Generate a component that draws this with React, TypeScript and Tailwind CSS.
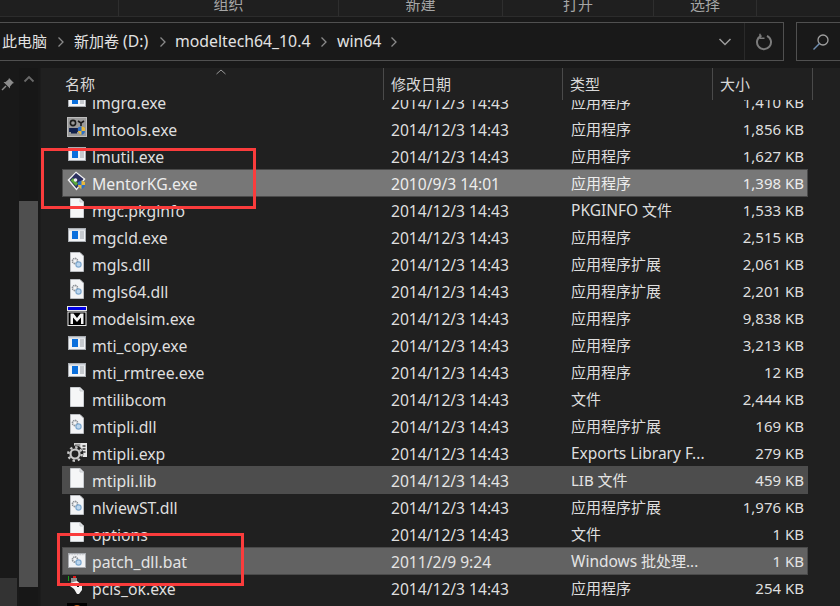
import React from "react";

const FONT = '"Noto Sans", "Noto Sans CJK SC", sans-serif';

function ExeIcon() {
  return (
    <svg width="20" height="20" viewBox="0 0 20 20">
      <rect x="1.500" y="3.500" width="17" height="13" fill="#f1f3f5" stroke="#a9adb2" />
      <rect x="2" y="4" width="16" height="1.500" fill="#cdd2d8" />
      <rect x="5" y="6" width="6" height="8" fill="#0a6fdc" />
      <path d="M13 7h4M13 9h4M13 11h4M13 13h4" stroke="#9aa0a8" strokeWidth="1" />
    </svg>
  );
}

function DocIcon() {
  return (
    <svg width="20" height="20" viewBox="0 0 20 20">
      <path d="M3.500 .5H13L16.500 4V19.500H3.500Z" fill="#f5f6f7" stroke="#c9ccd0" />
      <path d="M13 .5V4H16.500" fill="#e0e2e5" stroke="#c9ccd0" />
    </svg>
  );
}

function DllIcon() {
  return (
    <svg width="20" height="20" viewBox="0 0 20 20">
      <path d="M3.500 .5H13L16.500 4V19.500H3.500Z" fill="#f3f4f6" stroke="#b9bcc0" />
      <circle cx="8" cy="9" r="2.600" fill="none" stroke="#8b8f94" strokeWidth="1.600" strokeDasharray="1.400 .6" />
      <circle cx="11.500" cy="12.500" r="2.600" fill="#bcd6ee" stroke="#7fa9cf" strokeWidth="1.200" />
    </svg>
  );
}

function BatIcon() {
  return (
    <svg width="20" height="20" viewBox="0 0 20 20">
      <rect x="1.500" y="4.500" width="17" height="14" fill="#f1f2f4" stroke="#a8abb0" />
      <path d="M2 5.700h16" stroke="#b9bcc1" strokeDasharray="1 .6" />
      <circle cx="8" cy="10.500" r="2.600" fill="none" stroke="#8b8f94" strokeWidth="1.600" strokeDasharray="1.400 .6" />
      <circle cx="11.500" cy="13.500" r="2.600" fill="#bcd6ee" stroke="#7fa9cf" strokeWidth="1.200" />
    </svg>
  );
}

function ModelsimIcon() {
  return (
    <svg width="20" height="20" viewBox="0 0 20 20">
      <rect x="0.500" y="0.500" width="19" height="4" fill="#0000e6" stroke="#e8e8e8" />
      <rect x="1" y="6" width="18" height="13.500" fill="#000" stroke="#e8e8e8" />
      <path d="M3.500 18V7.500H6.500L10 12L13.500 7.500H16.500V18H14V11.500L10 16L6 11.500V18Z" fill="#f4f4f4" />
    </svg>
  );
}

function LmtoolsIcon() {
  return (
    <svg width="20" height="20" viewBox="0 0 20 20">
      <rect x="0.500" y="0.500" width="19" height="19" fill="#9a9a9a" stroke="#bdbdbd" />
      <circle cx="6" cy="6" r="2.600" fill="none" stroke="#1b1b1b" strokeWidth="1.600" />
      <path d="M11 4l3 2 3-2M14 6v3" stroke="#1b1b1b" strokeWidth="1.600" fill="none" />
      <path d="M3 12h7v2H3zM4 15.500h6" stroke="#10204c" strokeWidth="1.800" />
      <path d="M14.500 9l3.500 1.500V14q0 2.500-3.500 4q-3.500-1.500-3.500-4V10.500Z" fill="#2c6fc7" />
      <path d="M14.500 9l3.500 1.500V14h-3.500ZM14.500 14H11q0 2.500 3.500 4Z" fill="#e9b93c" />
    </svg>
  );
}

function MentorIcon() {
  return (
    <svg width="20" height="20" viewBox="0 0 20 20">
      <path d="M9 .5L18.500 8 9.500 19.500.5 9Z" fill="#f4f4f4" />
      <path d="M9 2L16.500 8 9.500 17.500 2.500 9Z" fill="#2c3060" />
      <path d="M3.500 9.500L9 15l2-2.500L6 7Z" fill="#5ba83a" />
      <circle cx="8.500" cy="9" r="1.800" fill="#f0f0f0" />
      <path d="M14.500 9.500l3.500 1.500V14q0 2.500-3.500 4q-3.500-1.500-3.500-4V11Z" fill="#2c6fc7" />
      <path d="M14.500 9.500l3.500 1.500V14h-3.500ZM14.500 14H11q0 2.500 3.500 4Z" fill="#e9b93c" />
    </svg>
  );
}

function ExpIcon() {
  return (
    <svg width="20" height="20" viewBox="0 0 20 20" className="overflow-visible">
      <rect x="7.500" y="2.500" width="6" height="13" fill="#9c9c9c" stroke="#cfcfcf" />
      <rect x="14" y="2" width="6" height="14" fill="#e6e6e6" />
      <path d="M15.500 5h3M15.500 8h3M15.500 11h3" stroke="#3c3c3c" strokeWidth="1.400" />
      <circle cx="8" cy="13" r="8.400" fill="#202020" />
      <circle cx="8" cy="13" r="4.500" fill="none" stroke="#c8c8c8" strokeWidth="2.200" />
      <circle cx="8" cy="13" r="6.700" fill="none" stroke="#c8c8c8" strokeWidth="2.400" strokeDasharray="2.400 2.860" />
    </svg>
  );
}

function PcisIcon() {
  return (
    <svg width="20" height="20" viewBox="0 0 20 20">
      <rect x="1" y="0" width="1" height="5" fill="#18a018" />
      <rect x="6" y="0" width="3" height="2" fill="#e01818" />
      <path d="M4 2H10V6L4 8Z" fill="#8d8d8d" />
      <path d="M3 7L10 5L15 9V14L12 18H10L7 13L3 10Z" fill="#f4f4f4" />
      <path d="M10 8H12V11H10Z" fill="#111" />
    </svg>
  );
}

function OrangeIcon() {
  return (
    <svg width="20" height="20" viewBox="0 0 20 20">
      <rect x="0" y="0" width="20" height="20" fill="#000" />
      <circle cx="10" cy="7" r="5" fill="#c8641e" />
    </svg>
  );
}

function Lat({ children }: { children: React.ReactNode }) {
  return <span className="text-[15.500px] leading-[22px]">{children}</span>;
}

type Row = {
  icon: React.ReactNode;
  name: string;
  date: string;
  type: React.ReactNode;
  size: string;
  tone?: "selected" | "hover" | "focus";
};

const D = "2014/12/3 14:43";
const APP = "应用程序";
const EXT = "应用程序扩展";

const rows: Row[] = [
  { icon: <ExeIcon />, name: "lmgrd.exe", date: D, type: APP, size: "1,410 KB" },
  { icon: <LmtoolsIcon />, name: "lmtools.exe", date: D, type: APP, size: "1,856 KB" },
  { icon: <ExeIcon />, name: "lmutil.exe", date: D, type: APP, size: "1,627 KB" },
  { icon: <MentorIcon />, name: "MentorKG.exe", date: "2010/9/3 14:01", type: APP, size: "1,398 KB", tone: "selected" },
  { icon: <DocIcon />, name: "mgc.pkginfo", date: D, type: <><Lat>PKGINFO</Lat> 文件</>, size: "1,533 KB" },
  { icon: <ExeIcon />, name: "mgcld.exe", date: D, type: APP, size: "2,515 KB" },
  { icon: <DllIcon />, name: "mgls.dll", date: D, type: EXT, size: "2,061 KB" },
  { icon: <DllIcon />, name: "mgls64.dll", date: D, type: EXT, size: "2,201 KB" },
  { icon: <ModelsimIcon />, name: "modelsim.exe", date: D, type: APP, size: "9,838 KB" },
  { icon: <ExeIcon />, name: "mti_copy.exe", date: D, type: APP, size: "3,213 KB" },
  { icon: <ExeIcon />, name: "mti_rmtree.exe", date: D, type: APP, size: "12 KB" },
  { icon: <DocIcon />, name: "mtilibcom", date: D, type: "文件", size: "2,444 KB" },
  { icon: <DllIcon />, name: "mtipli.dll", date: D, type: EXT, size: "169 KB" },
  { icon: <ExpIcon />, name: "mtipli.exp", date: D, type: <Lat>Exports Library F...</Lat>, size: "279 KB" },
  { icon: <DocIcon />, name: "mtipli.lib", date: D, type: "LIB 文件", size: "459 KB", tone: "hover" },
  { icon: <DllIcon />, name: "nlviewST.dll", date: D, type: EXT, size: "1,976 KB" },
  { icon: <DocIcon />, name: "options", date: D, type: "文件", size: "1 KB" },
  { icon: <BatIcon />, name: "patch_dll.bat", date: "2011/2/9 9:24", type: <><Lat>Windows</Lat> 批处理...</>, size: "1 KB", tone: "focus" },
  { icon: <PcisIcon />, name: "pcis_ok.exe", date: D, type: APP, size: "254 KB" },
  { icon: <OrangeIcon />, name: "", date: "", type: "", size: "" },
];

function toneClass(t?: Row["tone"]) {
  if (t === "selected") return "bg-[#777777] border border-[#4a4a4a] text-[#ececec]";
  if (t === "focus") return "bg-[#626262] border border-[#4a4a4a] text-[#e4e4e4]";
  if (t === "hover") return "bg-[#4d4d4d] border border-[#4d4d4d] text-[#e4e4e4]";
  return "border border-transparent text-[#dedede]";
}

function FileRow({ r }: { r: Row }) {
  return (
    <div className={`ml-[21px] w-[746px] h-[28px] -mb-px flex items-center text-[15px] leading-[22px] ${toneClass(r.tone)}`}>
      <div className="w-[328px] h-[22px] flex items-center pl-[4px] gap-[5px] shrink-0">
        <span className="w-[20px] h-[20px] shrink-0 -mt-[4px]">{r.icon}</span>
        <span className="whitespace-nowrap text-[15.800px] leading-[22px] translate-y-[1px]">{r.name}</span>
      </div>
      <div className="w-[180px] h-[22px] shrink-0 whitespace-nowrap text-[15.600px] leading-[22px] translate-y-[1px]">{r.date}</div>
      <div className="w-[150px] h-[22px] shrink-0 whitespace-nowrap">{r.type}</div>
      <div className="flex-1 h-[22px] text-right pr-[3px] whitespace-nowrap">{r.size}</div>
    </div>
  );
}

function Chevron({ className }: { className: string }) {
  return (
    <svg width="8" height="12" viewBox="0 0 8 12" className={`shrink-0 ${className}`}>
      <path d="M1.500 1.500L6 6L1.500 10.500" fill="none" stroke="#8a8a8a" strokeWidth="1.300" />
    </svg>
  );
}

function ToolGroup({ label, w }: { label: string; w: string }) {
  return (
    <div className={`${w} h-full border-r border-[#2e2e2e] flex justify-center shrink-0`}>
      <span className="-mt-[6px] leading-[20px] text-[15px] text-[#a6a6a6]">{label}</span>
    </div>
  );
}

function HeaderCell({ w, children }: { w: string; children?: React.ReactNode }) {
  return (
    <div className={`${w} shrink-0 h-[32px] border-r border-[#4a4a4a] pl-[7px] flex items-center text-[15px] text-[#d8d8d8]`}>
      {children}
    </div>
  );
}

export default function App() {
  return (
    <div
      className="relative w-[840px] h-[606px] overflow-hidden bg-[#191919] flex flex-col"
      style={{ fontFamily: FONT }}
    >
      {/* ribbon remnant */}
      <div className="h-[17px] shrink-0 bg-[#1f1f1f] border-b border-[#2c2c2c] flex overflow-hidden">
        <div className="w-[119px] h-full border-r border-[#2e2e2e] shrink-0" />
        <ToolGroup label="组织" w="w-[220px]" />
        <ToolGroup label="新建" w="w-[164px]" />
        <ToolGroup label="打开" w="w-[151px]" />
        <ToolGroup label="选择" w="w-[103px]" />
      </div>

      {/* address row */}
      <div className="mt-[5px] h-[39px] shrink-0 flex">
        <div className="w-[784px] shrink-0 border-y border-r border-[#505050] flex items-center text-[15px] text-[#e2e2e2]">
          <span className="ml-[2px] w-[45px] whitespace-nowrap">此电脑</span>
          <Chevron className="ml-[10px]" />
          <span className="ml-[9px] w-[74px] whitespace-nowrap">新加卷 <span className="text-[15.800px]">(D:)</span></span>
          <Chevron className="ml-[11px]" />
          <span className="ml-[8px] w-[135px] whitespace-nowrap text-[15.800px]">modeltech64_10.4</span>
          <Chevron className="ml-[10px]" />
          <span className="ml-[9px] w-[44px] whitespace-nowrap text-[15.800px]">win64</span>
          <Chevron className="ml-[9px]" />
          <div className="flex-1" />
          <svg width="14" height="10" viewBox="0 0 14 10" className="mr-[12px]">
            <path d="M1.500 2L7 7.500L12.500 2" fill="none" stroke="#9c9c9c" strokeWidth="1.500" />
          </svg>
          <div className="w-[39px] h-full border-l border-[#2a2a2a] flex items-center justify-center">
            <svg width="18" height="18" viewBox="0 0 18 18">
              <path d="M6.500 2.600A7 7 0 1 0 12 2.800" fill="none" stroke="#7c7c7c" strokeWidth="2" />
              <path d="M5 .8V5.200H9.500" fill="none" stroke="#7c7c7c" strokeWidth="1.500" />
            </svg>
          </div>
        </div>
        <div className="ml-[12px] flex-1 border-y border-l border-[#505050] flex items-center pl-[15px]">
          <svg width="18" height="18" viewBox="0 0 18 18">
            <circle cx="11" cy="7" r="5" fill="none" stroke="#a0a0a0" strokeWidth="1.300" />
            <path d="M7.500 10.500L1.500 16.500" stroke="#6f8db0" strokeWidth="1.500" />
          </svg>
        </div>
      </div>

      {/* body */}
      <div className="mt-[7px] flex-1 flex min-h-0">
        {/* nav pane */}
        <div className="w-[41px] shrink-0 bg-[#191919] border-r border-[#1c1c1c] flex">
          <div className="w-[19px] shrink-0 flex flex-col justify-between">
            <div className="pt-[9px] pl-[1px]">
              <svg width="14" height="14" viewBox="0 0 14 14">
                <path d="M8 1L13 6L11.500 6.500L9 9.500V11.500L2.500 5L4.500 5L7.500 2.500Z" fill="#8c8c8c" />
                <path d="M5 9L1 13" stroke="#8c8c8c" strokeWidth="1.400" />
              </svg>
            </div>
            <div className="w-[17px] h-[28px] bg-[#333333]" />
          </div>
          <div className="w-[19px] shrink-0 flex flex-col bg-[#171717]">
            <div className="h-[133px] flex items-start justify-center pt-[7px]">
              <svg width="12" height="8" viewBox="0 0 12 8">
                <path d="M1.500 6.500L6 2L10.500 6.500" fill="none" stroke="#6a6a6a" strokeWidth="1.800" />
              </svg>
            </div>
            <div className="h-[386px] bg-[#4f4f4f]" />
          </div>
        </div>

        {/* file area */}
        <div className="flex-1 min-w-0 bg-[#202020] flex flex-col">
          <div className="h-[32px] shrink-0 bg-[#202020] flex relative z-10">
            <div className="w-[343px] shrink-0 h-[32px] border-r border-[#4a4a4a] pl-[24px] flex items-center text-[15px] text-[#d8d8d8]">
              名称
            </div>
            <HeaderCell w="w-[179px]">修改日期</HeaderCell>
            <HeaderCell w="w-[150px]">类型</HeaderCell>
            <HeaderCell w="w-[100px]">大小</HeaderCell>
            <svg width="12" height="6" viewBox="0 0 12 6" className="absolute left-[174px] top-[1px]">
              <path d="M1.500 5L6 1L10.500 5" fill="none" stroke="#9a9a9a" strokeWidth="1" />
            </svg>
          </div>
          <div className="flex-1 overflow-hidden">
            <div className="-mt-[12px]">
              {rows.map((r) => (
                <FileRow key={r.name || "last"} r={r} />
              ))}
            </div>
          </div>
        </div>
      </div>

      {/* red annotation boxes */}
      <div className="absolute left-[41px] top-[148px] w-[215px] h-[61px] border-[3px] border-[#fa3c3c]" />
      <div className="absolute left-[57px] top-[533px] w-[187px] h-[53px] border-[3px] border-[#fa3c3c]" />
    </div>
  );
}
